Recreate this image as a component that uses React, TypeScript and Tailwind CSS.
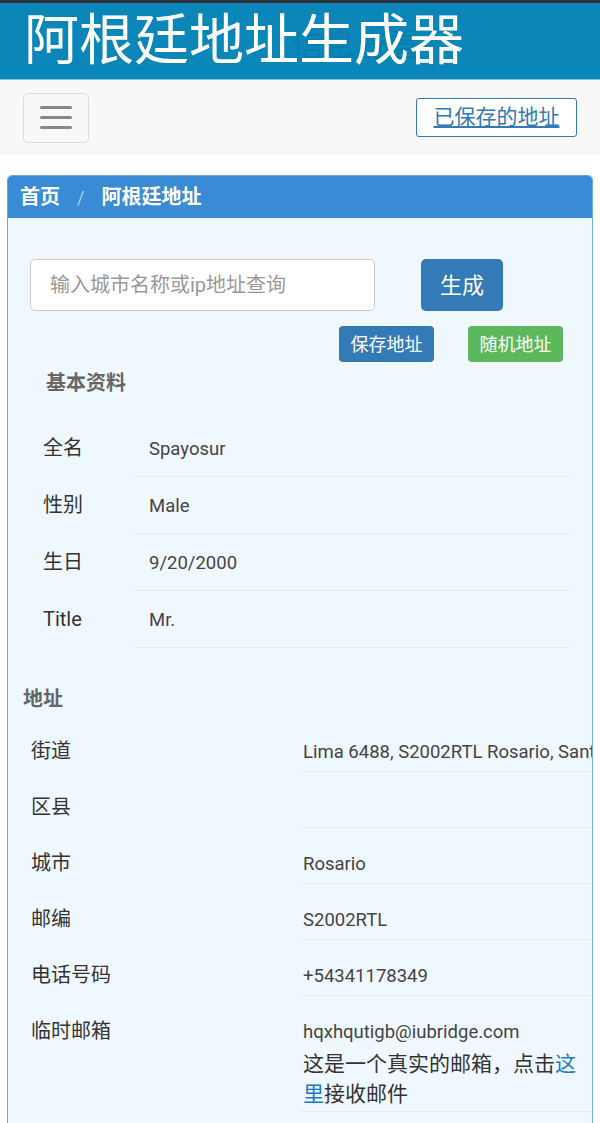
const FONT = "font-['Roboto','Noto_Sans_CJK_SC',sans-serif]";

const basicInfo = [
  { label: '全名', value: 'Spayosur' },
  { label: '性别', value: 'Male' },
  { label: '生日', value: '9/20/2000' },
  { label: 'Title', value: 'Mr.' },
];

const address = [
  { label: '街道', value: 'Lima 6488, S2002RTL Rosario, Santa Fe, Argentina' },
  { label: '区县', value: '' },
  { label: '城市', value: 'Rosario' },
  { label: '邮编', value: 'S2002RTL' },
  { label: '电话号码', value: '+54341178349' },
];

function BasicRow({ label, value }: { label: string; value: string }) {
  return (
    <div className="flex">
      <div className="w-[126px] shrink-0 pl-[35px] pt-[16px] text-[20px] leading-[24px] text-[#333]">{label}</div>
      <div className="w-[437px] border-b border-[#e6ebf0] pt-[17px] pb-[15px] pl-[15px] text-[18.5px] leading-[24px] text-[#444]">
        {value}
      </div>
    </div>
  );
}

function AddressRow({ label, value }: { label: string; value: string }) {
  return (
    <div className="flex">
      <div className="w-[292px] shrink-0 pl-[23px] pt-[23px] text-[20px] leading-[24px] text-[#333]">{label}</div>
      <div className="min-w-0 flex-1 whitespace-nowrap border-b border-[#e6ebf0] pt-[24px] pb-[7px] pl-[3px] text-[18.5px] leading-[24px] text-[#444]">
        {value || '\u00a0'}
      </div>
    </div>
  );
}

export default function App() {
  return (
    <div className={`${FONT} min-h-[1123px] w-[600px] overflow-hidden bg-white`}>
      {/* title bar */}
      <div className="h-[3px] bg-[#2d3338]" />
      <div className="relative h-[77px] border-b border-[#7fc3df] bg-[#0a86b9] pl-[24px]">
        <div className="absolute left-[292px] top-[22px] text-[32px] leading-[40px] text-black/[0.07]">信息查看</div>
        <h1 className="relative text-[55px] leading-[74px] font-normal text-white">阿根廷地址生成器</h1>
      </div>

      {/* nav */}
      <div className="flex h-[75px] items-center justify-between bg-[#f8f8f8] pl-[23px] pr-[23px]">
        <button className="flex h-[50px] w-[66px] flex-col items-center justify-center gap-[7px] rounded-[5px] border border-[#dcdcdc]">
          <span className="h-[3px] w-[32px] rounded bg-[#888]" />
          <span className="h-[3px] w-[32px] rounded bg-[#888]" />
          <span className="h-[3px] w-[32px] rounded bg-[#888]" />
        </button>
        <a className="flex h-[39px] w-[161px] items-center justify-center rounded-[3px] border border-[#337ab7] bg-white text-[21px] text-[#337ab7] underline">
          已保存的地址
        </a>
      </div>

      {/* panel */}
      <div className="px-[7px] pt-[20px]">
        <div className="overflow-hidden rounded-t-[5px] border border-[#6ea5dc] bg-[#f0f8ff]">
          <div className="flex h-[42px] items-center bg-[#3a8bd6] pl-[12px] text-[20px] font-bold text-white">
            <span>首页</span>
            <span className="px-[17px] text-[18px] font-normal text-[#a9cdf0]">/</span>
            <span>阿根廷地址</span>
          </div>

          <div className="pt-[41px]">
            <div className="flex items-center">
              <div className="ml-[22px] flex h-[52px] w-[345px] items-center rounded-[5px] border border-[#cccccc] bg-white pl-[19px] text-[20px] text-[#999]">
                输入城市名称或ip地址查询
              </div>
              <button className="ml-[46px] flex h-[52px] w-[82px] items-center justify-center rounded-[5px] bg-[#337ab7] text-[22px] text-white">
                生成
              </button>
            </div>
            <div className="mt-[15px] flex justify-end gap-[34px] pr-[29px]">
              <button className="flex h-[36px] w-[95px] items-center justify-center rounded-[4px] bg-[#337ab7] text-[18px] text-white">
                保存地址
              </button>
              <button className="flex h-[36px] w-[95px] items-center justify-center rounded-[4px] bg-[#5cb85c] text-[18px] text-white">
                随机地址
              </button>
            </div>

            <div className="pl-[38px] pt-[7px] text-[20px] leading-[28px] font-bold text-[#666]">基本资料</div>
            <div className="mt-[23px]">
              {basicInfo.map(r => (
                <BasicRow key={r.label} {...r} />
              ))}
            </div>

            <div className="pl-[15px] pt-[37px] text-[20px] leading-[28px] font-bold text-[#666]">地址</div>
            <div className="mt-[3px]">
              {address.map(r => (
                <AddressRow key={r.label} {...r} />
              ))}
              <div className="flex">
                <div className="w-[292px] shrink-0 pl-[23px] pt-[23px] text-[20px] leading-[24px] text-[#333]">临时邮箱</div>
                <div className="min-w-0 flex-1 border-b border-[#e6ebf0] pt-[24px] pb-[2px] pl-[3px] pr-[6px]">
                  <div className="text-[18.5px] leading-[24px] text-[#444]">hqxhqutigb@iubridge.com</div>
                  <div className="mt-[5px] text-[21px] leading-[30px] text-[#333]">
                    这是一个真实的邮箱，点击<a className="text-[#1a7ac4]">这里</a>接收邮件
                  </div>
                </div>
              </div>
              <div className="h-[20px]" />
            </div>
          </div>
        </div>
      </div>
    </div>
  );
}
